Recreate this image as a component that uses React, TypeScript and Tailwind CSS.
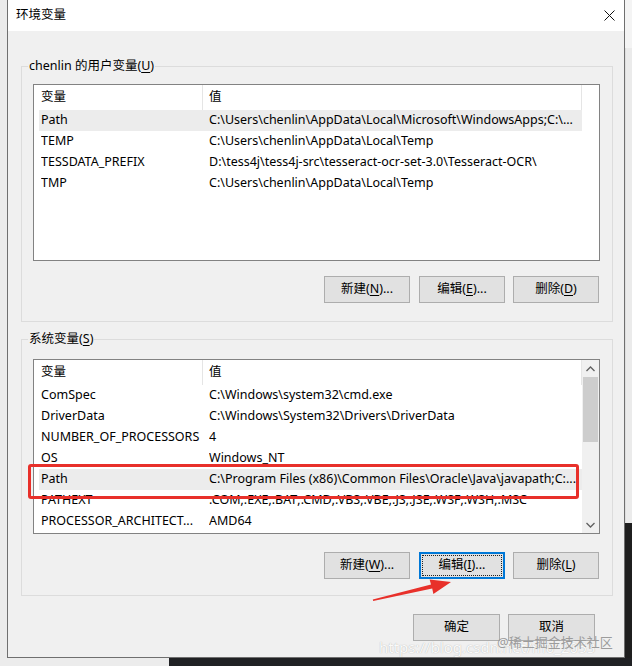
import { ReactNode } from 'react';
import clsx from 'clsx';

const userVars = [
  { name: 'Path', value: 'C:\\Users\\chenlin\\AppData\\Local\\Microsoft\\WindowsApps;C:\\...', selected: true },
  { name: 'TEMP', value: 'C:\\Users\\chenlin\\AppData\\Local\\Temp' },
  { name: 'TESSDATA_PREFIX', value: 'D:\\tess4j\\tess4j-src\\tesseract-ocr-set-3.0\\Tesseract-OCR\\' },
  { name: 'TMP', value: 'C:\\Users\\chenlin\\AppData\\Local\\Temp' },
];

const systemVars = [
  { name: 'ComSpec', value: 'C:\\Windows\\system32\\cmd.exe' },
  { name: 'DriverData', value: 'C:\\Windows\\System32\\Drivers\\DriverData' },
  { name: 'NUMBER_OF_PROCESSORS', value: '4' },
  { name: 'OS', value: 'Windows_NT' },
  { name: 'Path', value: 'C:\\Program Files (x86)\\Common Files\\Oracle\\Java\\javapath;C:...', selected: true },
  { name: 'PATHEXT', value: '.COM;.EXE;.BAT;.CMD;.VBS;.VBE;.JS;.JSE;.WSF;.WSH;.MSC' },
  { name: 'PROCESSOR_ARCHITECT...', value: 'AMD64' },
];

type Row = { name: string; value: string; selected?: boolean };

// underlined access key, like (U)
function Key({ children }: { children: ReactNode }) {
  return <span className="underline underline-offset-[2px] decoration-[1px]">{children}</span>;
}

function Button({ children, focused, wide }: { children: ReactNode; focused?: boolean; wide?: boolean }) {
  return (
    <div
      className={clsx(
        'h-[27px] flex items-center justify-center bg-[#e1e1e1]',
        wide ? 'w-[87px]' : 'w-[86px]',
        focused ? 'border-2 border-[#0078d7] p-[1px]' : 'border border-[#adadad]'
      )}
    >
      {focused ? (
        <div className="w-full h-full flex items-center justify-center border border-dotted border-[#222]">
          {children}
        </div>
      ) : (
        children
      )}
    </div>
  );
}

function Chevron({ up }: { up?: boolean }) {
  return (
    <svg width="9" height="6" viewBox="0 0 9 6">
      <polyline
        points={up ? '0.5,5 4.5,1 8.5,5' : '0.5,1 4.5,5 8.5,1'}
        fill="none"
        stroke="#606060"
        strokeWidth="1.3"
      />
    </svg>
  );
}

function VarList({ rows, scroll, height }: { rows: Row[]; scroll?: boolean; height: string }) {
  return (
    <div className={clsx('w-[567px] border border-[#828282] bg-white flex', height)}>
      <div className="w-[548px] flex flex-col">
        <div className="h-[25px] flex">
          <div className="w-[169px] pl-[7px] border-r border-[#e5e5e5] flex items-center">变量</div>
          <div className="w-[379px] pl-[6px] border-r border-[#e5e5e5] flex items-center">值</div>
        </div>
        {rows.map((r) => (
          <div
            key={r.name}
            className={clsx('ml-[5px] w-[543px] h-[21px] flex items-center pl-[2px]', r.selected && 'bg-[#ececec]')}
          >
            <div className="w-[168px] whitespace-nowrap overflow-hidden">{r.name}</div>
            <div className="flex-1 whitespace-nowrap overflow-hidden">{r.value}</div>
          </div>
        ))}
      </div>
      {scroll && (
        <div className="w-[17px] bg-[#f0f0f0] flex flex-col">
          <div className="h-[17px] flex items-center justify-center">
            <Chevron up />
          </div>
          <div className="flex-1 px-[1px]">
            <div className="h-[65px] bg-[#cdcdcd]" />
          </div>
          <div className="h-[17px] flex items-center justify-center">
            <Chevron />
          </div>
        </div>
      )}
    </div>
  );
}

function Group({
  label,
  children,
  className,
}: {
  label: ReactNode;
  children: ReactNode;
  className?: string;
}) {
  return (
    <div className={clsx('relative border border-[#dcdcdc] pl-[11px] pr-[12px] flex flex-col', className)}>
      <span className="absolute top-[-9px] left-[6px] px-[1px] leading-[16px] bg-[#f0f0f0]">{label}</span>
      {children}
    </div>
  );
}

export default function App() {
  return (
    <div className="relative w-[632px] h-[666px] overflow-hidden flex flex-col text-[12.5px] text-black font-['Noto_Sans','Noto_Sans_CJK_SC',sans-serif]">
      <div className="flex h-[658px]">
        <div className="w-[7px] bg-[#ebebeb]" />

        {/* dialog */}
        <div className="w-[618px] border-x border-b border-[#6f6f6f] bg-[#f0f0f0] flex flex-col">
          <div className="h-[31px] bg-white flex items-center justify-between pl-[8px] pr-[9px]">
            <span>环境变量</span>
            <svg width="11" height="11" viewBox="0 0 11 11">
              <path d="M0.5 0.5 L10.5 10.5 M10.5 0.5 L0.5 10.5" stroke="#111" strokeWidth="1" />
            </svg>
          </div>

          <div className="flex-1 pl-[13px] pr-[11px] pt-[35px] flex flex-col">
            <Group
              label={
                <>
                  chenlin 的用户变量(<Key>U</Key>)
                </>
              }
              className="h-[256px] pt-[17px]"
            >
              <VarList rows={userVars} height="h-[177px]" />
              <div className="mt-[15px] pr-[1px] flex justify-end">
                <Button>
                  新建(<Key>N</Key>)...
                </Button>
                <div className="ml-[9px]">
                  <Button>
                    编辑(<Key>E</Key>)...
                  </Button>
                </div>
                <div className="ml-[8px]">
                  <Button>
                    删除(<Key>D</Key>)
                  </Button>
                </div>
              </div>
            </Group>

            <Group
              label={
                <>
                  系统变量(<Key>S</Key>)
                </>
              }
              className="mt-[17px] h-[257px] pt-[19px]"
            >
              <VarList rows={systemVars} scroll height="h-[175px]" />
              <div className="mt-[18px] pr-[1px] flex justify-end">
                <Button>
                  新建(<Key>W</Key>)...
                </Button>
                <div className="ml-[9px]">
                  <Button focused>
                    编辑(<Key>I</Key>)...
                  </Button>
                </div>
                <div className="ml-[8px]">
                  <Button>
                    删除(<Key>L</Key>)
                  </Button>
                </div>
              </div>
            </Group>

            <div className="mt-[18px] pr-[18px] flex justify-end gap-[8px]">
              <Button wide>确定</Button>
              <Button wide>取消</Button>
            </div>
          </div>
        </div>

        <div className="w-[7px] flex flex-col">
          <div className="h-[48px] bg-[#f4f4f4]" />
          <div className="h-[475px] bg-[#ebebeb] border-l border-[#dedede]" />
          <div className="flex-1 bg-[#1f1f1f]" />
        </div>
      </div>

      <div className="flex-1 flex">
        <div className="w-[169px] bg-[#ececec]" />
        <div className="flex-1 bg-[#202124]" />
      </div>

      {/* annotation: red box around Path */}
      <div className="absolute left-[28px] top-[464px] w-[551px] h-[35px] border-[3px] border-[#e8302a] rounded-[3px]" />

      {/* annotation arrow */}
      <svg className="absolute left-0 top-0 pointer-events-none" width="632" height="666" viewBox="0 0 632 666">
        <polygon
          points="372.8,599.6 431,584.6 429.6,579.4 451,582 433.4,594 432.2,588.6 373.2,601"
          fill="#e8302a"
        />
      </svg>

      {/* watermarks */}
      <span className="absolute left-[379px] top-[637px] text-[15px] leading-[20px] text-white opacity-70 whitespace-nowrap [text-shadow:0_0_1px_#8a8a8a]">
        https://blog.csdn.net/m0_2053
      </span>
      <span className="absolute left-[497px] top-[633px] text-[13px] leading-[18px] text-[#9c9c9c] whitespace-nowrap">
        @稀土掘金技术社区
      </span>
    </div>
  );
}
